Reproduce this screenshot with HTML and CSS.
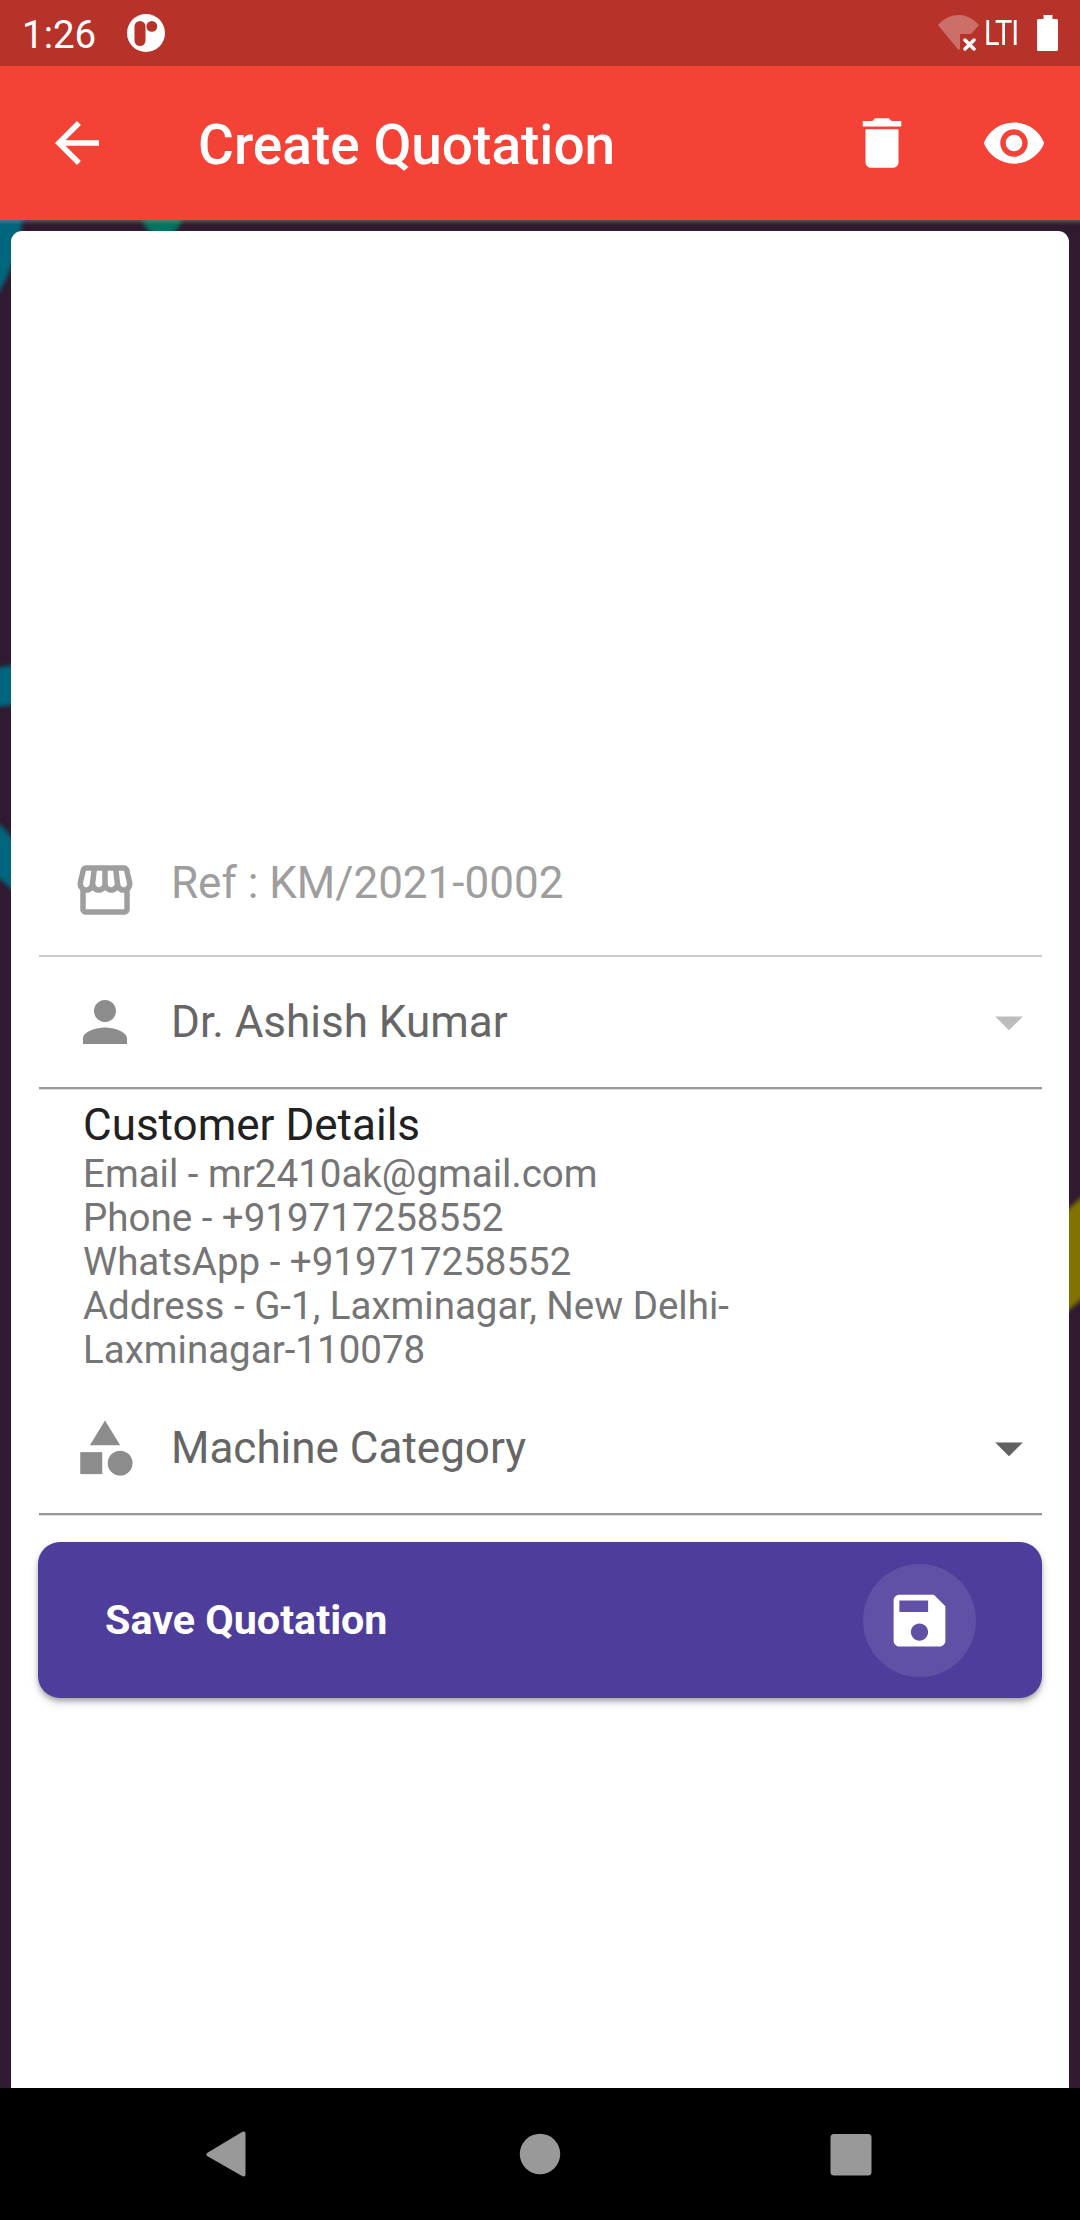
FILE: index.html
```html
<!DOCTYPE html>
<html lang="en">
<head>
<meta charset="utf-8">
<title>Create Quotation</title>
<link rel="stylesheet" href="styles.css">
</head>
<body>
<div class="screen">
  <div class="status-bar">
    <span class="clock">1:26</span>
    <svg class="notif" viewBox="0 0 38 38"><circle cx="19" cy="19" r="19" fill="#fff"/><rect x="7.5" y="7" width="11" height="25" rx="5.5" fill="#b73229"/><circle cx="24.8" cy="12.4" r="5.4" fill="#b73229"/></svg>
    <div class="status-right">
      <svg class="wifi" viewBox="0 0 41 36"><path d="M0 10C12-3.300 29-3.300 41 10L33 19H22V33.500L20.500 35Z" fill="#fff" fill-opacity=".3"/><path d="M27 25l9 9M36 25l-9 9" stroke="#fff" stroke-width="3.500" stroke-linecap="round"/></svg>
      <span class="network">LTI</span>
      <svg class="battery" viewBox="0 0 21 36"><path d="M6.500 0h9v4H19.500q1.500 0 1.500 1.500V34.500q0 1.500-1.500 1.500H1.500Q0 36 0 34.500V5.500Q0 4 1.500 4h5z" fill="#fff"/></svg>
    </div>
  </div>

  <header class="app-bar">
    <svg class="icon" viewBox="0 0 24 24"><path d="M20 11H7.830l5.590-5.590L12 4l-8 8 8 8 1.410-1.410L7.830 13H20v-2z"/></svg>
    <h1 class="title">Create Quotation</h1>
    <svg class="icon" viewBox="0 0 24 24"><path d="M6 19c0 1.100.9 2 2 2h8c1.100 0 2-.9 2-2V7H6v12zM19 4h-3.500l-1-1h-5l-1 1H5v2h14V4z"/></svg>
    <svg class="icon" viewBox="0 0 24 24"><path d="M12 4.500C7 4.500 2.730 7.610 1 12c1.730 4.390 6 7.500 11 7.500s9.270-3.110 11-7.500c-1.730-4.390-6-7.500-11-7.500zM12 17c-2.760 0-5-2.240-5-5s2.240-5 5-5 5 2.240 5 5-2.240 5-5 5zm0-8c-1.660 0-3 1.340-3 3s1.340 3 3 3 3-1.340 3-3-1.340-3-3-3z"/></svg>
  </header>

  <main class="content">
    <svg class="wallpaper" viewBox="0 0 1080 1868">
      <g class="shapes">
        <path d="M-10-20H24Q22 40-6 80Z" fill="#00667d"/>
        <circle cx="162" cy="-4" r="20" fill="#00735f"/>
        <path d="M-10 449L20 444V484L-10 488Z" fill="#00667d"/>
        <path d="M-10 598Q6 606 20 630V680Q8 662-10 653Z" fill="#00667d"/>
        <path d="M1060 996L1090 970V1072L1060 1098Z" fill="#807300"/>
      </g>
    </svg>
    <section class="card">
      <div class="field field-ref">
        <svg class="icon" viewBox="0 0 24 24"><path d="M21.900 8.890l-1.050-4.370c-.22-.9-1-1.520-1.910-1.520H5.050c-.9 0-1.690.63-1.900 1.520L2.100 8.890c-.24 1.020-.02 2.060.62 2.880.08.11.19.19.28.29V19c0 1.100.9 2 2 2h14c1.100 0 2-.9 2-2v-6.940c.09-.09.2-.18.28-.28.64-.82.87-1.870.62-2.890zm-2.990-3.900l1.050 4.370c.1.42.01.84-.25 1.170-.14.18-.44.47-.94.47-.61 0-1.140-.49-1.210-1.140L16.980 5l1.930-.01zM13 5h1.960l.54 4.520c.05.39-.07.78-.33 1.070-.22.26-.54.41-.95.41-.67 0-1.220-.59-1.220-1.310V5zM8.490 9.520L9.040 5H11v4.690c0 .72-.55 1.310-1.290 1.310-.34 0-.65-.15-.89-.41-.25-.29-.37-.68-.33-1.070zm-4.450-.16L5.050 5h1.970l-.58 4.860c-.08.65-.6 1.140-1.210 1.140-.49 0-.8-.29-.93-.47-.27-.32-.36-.75-.26-1.170zM5 19v-6.030c.08.01.15.03.23.03.87 0 1.660-.36 2.240-.95.6.6 1.400.95 2.310.95.87 0 1.650-.36 2.230-.93.59.57 1.390.93 2.290.93.84 0 1.640-.35 2.240-.95.58.59 1.370.95 2.240.95.08 0 .15-.02.23-.03V19H5z"/></svg>
        <span class="value">Ref : KM/2021-0002</span>
      </div>
      <div class="field field-select">
        <svg class="icon" viewBox="0 0 24 24"><path d="M12 12c2.210 0 4-1.790 4-4s-1.790-4-4-4-4 1.790-4 4 1.790 4 4 4zm0 2c-2.670 0-8 1.340-8 4v2h16v-2c0-2.660-5.330-4-8-4z"/></svg>
        <span class="value">Dr. Ashish Kumar</span>
        <svg class="icon arrow arrow-disabled" viewBox="0 0 24 24"><path d="M7 10l5 5 5-5z"/></svg>
      </div>
      <div class="details">
        <h2 class="details-title">Customer Details</h2>
        <p class="line">Email - mr2410ak@gmail.com</p>
        <p class="line">Phone - +919717258552</p>
        <p class="line">WhatsApp - +919717258552</p>
        <p class="line">Address - G-1, Laxminagar, New Delhi-<br>Laxminagar-110078</p>
      </div>
      <div class="field field-select">
        <svg class="icon" viewBox="0 0 24 24"><path d="M12 2l-5.500 9h11z"/><circle cx="17.500" cy="17.500" r="4.500"/><path d="M3 13.500h8v8H3z"/></svg>
        <span class="value">Machine Category</span>
        <svg class="icon arrow" viewBox="0 0 24 24"><path d="M7 10l5 5 5-5z"/></svg>
      </div>
      <div class="save">
        <span class="save-label">Save Quotation</span>
        <span class="save-badge"><svg class="save-icon" viewBox="0 0 24 24"><path d="M17 3H5c-1.110 0-2 .9-2 2v14c0 1.100.89 2 2 2h14c1.100 0 2-.9 2-2V7l-4-4zm-5 16c-1.660 0-3-1.340-3-3s1.340-3 3-3 3 1.340 3 3-1.340 3-3 3zm3-10H5V5h10v4z"/></svg></span>
      </div>
    </section>
  </main>

  <nav class="nav-bar">
    <svg class="nav-icon" viewBox="0 0 46 46"><path d="M39.500 2.500V43.500L4.500 23.500Z" fill="#999" stroke="#999" stroke-width="4" stroke-linejoin="round"/></svg>
    <svg class="nav-icon" viewBox="0 0 46 46"><circle cx="24" cy="23" r="20.200" fill="#999"/></svg>
    <svg class="nav-icon" viewBox="0 0 46 46"><rect x="2.500" y="3" width="41" height="41.500" rx="3.500" fill="#999"/></svg>
  </nav>
</div>
</body>
</html>
```
FILE: styles.css
```css
* { box-sizing: border-box; }

body {
  margin: 0;
  font-family: Roboto, "Liberation Sans", sans-serif;
}

h1, h2, p { margin: 0; font-weight: 400; }
svg { display: block; flex: none; }

.screen {
  display: flex;
  flex-direction: column;
  width: 1080px;
  height: 2220px;
  overflow: hidden;
}

.status-bar {
  display: flex;
  align-items: center;
  height: 66px;
  padding: 0 22px 0 22px;
  background: #b73229;
  color: #fff;
}
.clock { width: 105px; font-size: 38.5px; line-height: 46px; padding-top: 4px; }
.notif { width: 38px; height: 38px; }
.status-right { display: flex; align-items: center; margin-left: auto; }
.wifi { width: 41px; height: 36px; margin-right: 5px; }
.network {
  width: 36px;
  font-size: 34.5px;
  line-height: 40px;
  letter-spacing: -1px;
  white-space: nowrap;
  transform: scaleX(.84);
  transform-origin: left;
}
.battery { width: 21px; height: 36px; margin-left: 17px; }

.icon { width: 66px; height: 66px; fill: currentColor; }

.app-bar {
  display: flex;
  align-items: center;
  height: 154px;
  padding: 0 33px 0 44px;
  background: #f44336;
  color: #fff;
}
.title {
  flex: 1;
  padding: 3px 0 0 88px;
  font-size: 55px;
  font-weight: 500;
  line-height: 64px;
}
.app-bar .icon:last-child { margin-left: 66px; }

.content {
  position: relative;
  flex: 1;
  padding: 11px 11px 0;
  background: #301a30;
}
.wallpaper { position: absolute; left: 0; top: 0; width: 1080px; height: 1868px; }
.shapes { filter: blur(2px); }
.content::before {
  content: "";
  position: absolute;
  left: 0;
  top: 0;
  z-index: 1;
  width: 100%;
  height: 5px;
  background: linear-gradient(rgba(150, 150, 150, .4), rgba(150, 150, 150, 0));
}

.card {
  position: relative;
  height: 100%;
  padding: 593px 27px 0 28px;
  border-radius: 11px 11px 0 0;
  background: #fff;
}

.field { display: flex; align-items: center; padding-left: 33px; color: #8c8c8c; }
.value { flex: 1; margin-left: 33px; font-size: 44px; line-height: 52px; }
.field-ref { height: 133px; border-bottom: 2px solid #cbcbcb; color: #9e9e9e; }
.field-ref .value { padding-bottom: 14px; }
.field-select {
  height: 132px;
  border-bottom: 2px solid #989898;
  box-shadow: 0 1px #ddd;
}
.field-select .value { color: #666; }
.arrow { color: #616161; }
.arrow-disabled { color: #bdbdbd; }

.details { padding: 10px 44px 11px; }
.details-title { font-size: 44px; line-height: 53px; color: #212121; }
.line { font-size: 38.5px; line-height: 44px; color: #757575; }

.save {
  display: flex;
  align-items: center;
  justify-content: space-between;
  height: 156px;
  margin: 27px 0 0 -1px;
  padding: 0 66px 0 67px;
  border-radius: 22px;
  background: #4f3d9b;
  box-shadow: 0 3px 4px rgba(0, 0, 0, .22), 0 5px 9px rgba(0, 0, 0, .16);
  color: #fff;
}
.save-label { font-size: 41.25px; font-weight: 700; line-height: 48px; }
.save-badge {
  display: flex;
  align-items: center;
  justify-content: center;
  width: 113px;
  height: 113px;
  border-radius: 50%;
  background: #6250a6;
}
.save-icon { width: 69px; height: 69px; fill: #fff; }

.nav-bar {
  display: flex;
  justify-content: space-between;
  align-items: center;
  height: 132px;
  padding: 0 206px 0 204px;
  background: #000;
}
.nav-icon { width: 46px; height: 46px; }
```
